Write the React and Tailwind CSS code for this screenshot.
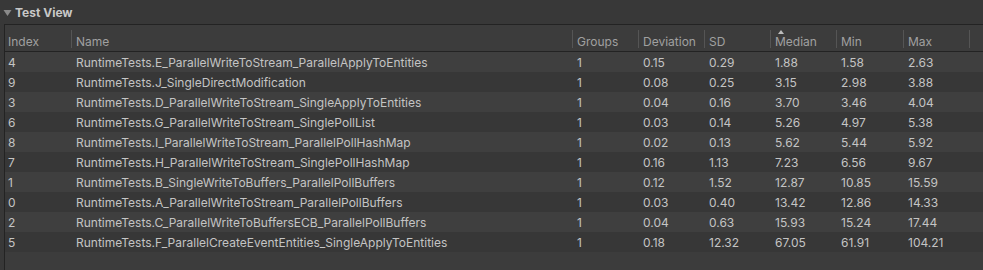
const rows = [
  ["4", "RuntimeTests.E_ParallelWriteToStream_ParallelApplyToEntities", "1", "0.15", "0.29", "1.88", "1.58", "2.63"],
  ["9", "RuntimeTests.J_SingleDirectModification", "1", "0.08", "0.25", "3.15", "2.98", "3.88"],
  ["3", "RuntimeTests.D_ParallelWriteToStream_SingleApplyToEntities", "1", "0.04", "0.16", "3.70", "3.46", "4.04"],
  ["6", "RuntimeTests.G_ParallelWriteToStream_SinglePollList", "1", "0.03", "0.14", "5.26", "4.97", "5.38"],
  ["8", "RuntimeTests.I_ParallelWriteToStream_ParallelPollHashMap", "1", "0.02", "0.13", "5.62", "5.44", "5.92"],
  ["7", "RuntimeTests.H_ParallelWriteToStream_SinglePollHashMap", "1", "0.16", "1.13", "7.23", "6.56", "9.67"],
  ["1", "RuntimeTests.B_SingleWriteToBuffers_ParallelPollBuffers", "1", "0.12", "1.52", "12.87", "10.85", "15.59"],
  ["0", "RuntimeTests.A_ParallelWriteToStream_ParallelPollBuffers", "1", "0.03", "0.40", "13.42", "12.86", "14.33"],
  ["2", "RuntimeTests.C_ParallelWriteToBuffersECB_ParallelPollBuffers", "1", "0.04", "0.63", "15.93", "15.24", "17.44"],
  ["5", "RuntimeTests.F_ParallelCreateEventEntities_SingleApplyToEntities", "1", "0.18", "12.32", "67.05", "61.91", "104.21"],
];

const headers = ["Index", "Name", "Groups", "Deviation", "SD", "Median", "Min", "Max"];
const widths = ["w-[66px]", "w-[501px]", "w-[66px]", "w-[66px]", "w-[66px]", "w-[66px]", "w-[67px]", "w-[66px]"];

export default function App() {
  return (
    <div className="w-[983px] h-[270px] bg-[#383838] overflow-hidden text-[12px] font-['Inter','Liberation_Sans',sans-serif]">
      <div className="h-[24px] flex items-center pl-[3px] pt-[1px]">
        <svg width="9" height="8" viewBox="0 0 9 8" className="mr-[3px]">
          <path d="M0.5 1 L8.5 1 L4.5 7 Z" fill="#8a8a8a" />
        </svg>
        <span className="font-bold text-[12px] text-[#c8c8c8]">Test View</span>
      </div>
      <div className="ml-[4px] border-l border-t border-[#232323] h-[246px] bg-[#3c3c3c]">
        <div className="flex h-[27px] border-b border-[#232323] bg-[#3c3c3c] text-[#a0a0a0]">
          {headers.map((h, i) => (
            <div key={h} className={`${widths[i]} shrink-0 relative flex items-end pb-[1px] ${i === 0 ? "pl-[3px]" : "pl-[5px]"}`}>
              {i > 0 && <div className="absolute left-0 top-[5px] h-[18px] w-px bg-[#555555]" />}
              {h === "Median" && (
                <svg width="6" height="4" viewBox="0 0 6 4" className="absolute left-[8px] top-[5px]">
                  <path d="M0 4 L3 0 L6 4 Z" fill="#bdbdbd" />
                </svg>
              )}
              <span className="leading-[16px]">{h}</span>
            </div>
          ))}
          <div className="relative flex-1">
            <div className="absolute left-0 top-[5px] h-[18px] w-px bg-[#555555]" />
          </div>
        </div>
        {rows.map((r, ri) => (
          <div key={ri} className={`flex h-[20px] items-center pt-[2px] text-[#c4c4c4] ${ri % 2 === 0 ? "bg-[#3f3f3f]" : "bg-[#373737]"}`}>
            {r.map((c, ci) => (
              <div key={ci} className={`${widths[ci]} shrink-0 whitespace-nowrap leading-[16px] ${ci === 0 ? "pl-[3px]" : "pl-[5px]"}`}>
                {c}
              </div>
            ))}
          </div>
        ))}
      </div>
    </div>
  );
}
